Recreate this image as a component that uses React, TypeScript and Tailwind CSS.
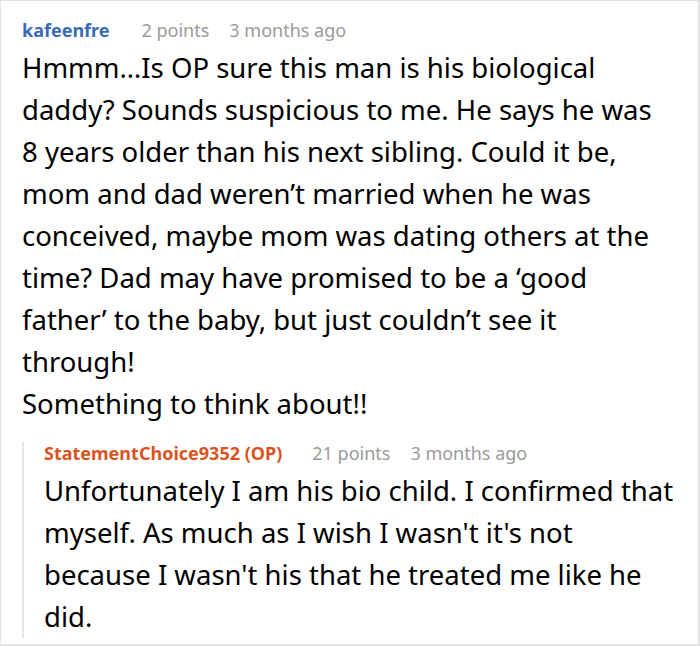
import React from 'react';

const font = { fontFamily: '"Noto Sans", "Open Sans", sans-serif' };

const parentLines = [
    'Hmmm…Is OP sure this man is his biological',
    'daddy? Sounds suspicious to me. He says he was',
    '8 years older than his next sibling. Could it be,',
    'mom and dad weren’t married when he was',
    'conceived, maybe mom was dating others at the',
    'time? Dad may have promised to be a ‘good',
    'father’ to the baby, but just couldn’t see it',
    'through!',
    'Something to think about!!',
];

const replyLines = [
    'Unfortunately I am his bio child. I confirmed that',
    "myself. As much as I wish I wasn't it's not",
    "because I wasn't his that he treated me like he",
    'did.',
];

export default function App() {
    return (
        <div className="w-[700px] h-[646px] bg-white" style={font}>
            <div className="h-[646px] border border-[#e3e3e3] border-b-2 border-r-2 pl-[21px] pt-[14px]">
                {/* Parent comment */}
                <div className="flex items-baseline text-[18px] leading-[30px]">
                    <span className="font-bold text-[#3a6cb6]">kafeenfre</span>
                    <span className="ml-[32px] text-[#9a9a9a]">2 points</span>
                    <span className="ml-[20px] text-[#9a9a9a]">3 months ago</span>
                </div>
                <div className="mt-[2px] text-[27.5px] leading-[42px] text-black whitespace-nowrap">
                    {parentLines.map((l, i) => (
                        <div key={i}>{l}</div>
                    ))}
                </div>

                {/* Reply */}
                <div className="mt-[17px] border-l-2 border-[#e6e6e6] pl-[20px]">
                    <div className="flex items-baseline text-[18px] leading-[22px]">
                        <span className="font-bold text-[#d9541f]">StatementChoice9352 (OP)</span>
                        <span className="ml-[30px] text-[#9a9a9a]">21 points</span>
                        <span className="ml-[20px] text-[#9a9a9a]">3 months ago</span>
                    </div>
                    <div className="mt-[6px] mb-[-10px] text-[27.5px] leading-[42px] text-black whitespace-nowrap">
                        {replyLines.map((l, i) => (
                            <div key={i}>{l}</div>
                        ))}
                    </div>
                </div>
            </div>
        </div>
    );
}
